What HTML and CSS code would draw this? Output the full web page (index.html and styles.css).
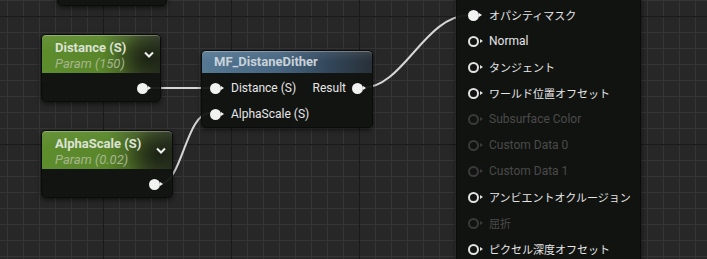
FILE: index.html
```html
<!DOCTYPE html>
<html lang="ja">
  <head>
    <meta charset="utf-8">
    <title>Material Graph</title>
    <link rel="stylesheet" href="styles.css">
  </head>
  <body>
    <div class="graph">
      <svg class="wires" width="707" height="259" viewBox="0 0 707 259">
        <path d="M150 88 L210 88"/>
        <path d="M160 184 C 182 184, 186 113, 210 113"/>
        <path d="M362 88 C 404 88, 424 15, 470 15"/>
      </svg>

      <div class="node stub"></div>

      <div class="node param n-distance">
        <div class="head">
          <div class="titles">
            <div class="title">Distance (S)</div>
            <div class="sub">Param (150)</div>
          </div>
          <svg class="chev" width="10" height="7" viewBox="0 0 10 7"><path d="M1 1.5 L5 5.5 L9 1.5"/></svg>
        </div>
        <div class="body out">
          <span class="pin on"></span>
        </div>
      </div>

      <div class="node param n-alpha">
        <div class="head">
          <div class="titles">
            <div class="title">AlphaScale (S)</div>
            <div class="sub">Param (0.02)</div>
          </div>
          <svg class="chev" width="10" height="7" viewBox="0 0 10 7"><path d="M1 1.5 L5 5.5 L9 1.5"/></svg>
        </div>
        <div class="body out">
          <span class="pin on"></span>
        </div>
      </div>

      <div class="node func n-dither">
        <div class="head">MF_DistaneDither</div>
        <div class="body">
          <div class="row">
            <div class="in"><span class="pin on"></span><span>Distance (S)</span></div>
            <div class="outp"><span>Result</span><span class="pin on"></span></div>
          </div>
          <div class="row">
            <div class="in"><span class="pin on"></span><span>AlphaScale (S)</span></div>
          </div>
        </div>
      </div>

      <div class="node result">
        <div class="in"><span class="pin on"></span><span class="jp">オパシティマスク</span></div>
        <div class="in"><span class="pin"></span><span>Normal</span></div>
        <div class="in"><span class="pin"></span><span class="jp">タンジェント</span></div>
        <div class="in"><span class="pin"></span><span class="jp">ワールド位置オフセット</span></div>
        <div class="in off"><span class="pin"></span><span>Subsurface Color</span></div>
        <div class="in off"><span class="pin"></span><span>Custom Data 0</span></div>
        <div class="in off"><span class="pin"></span><span>Custom Data 1</span></div>
        <div class="in"><span class="pin"></span><span class="jp">アンビエントオクルージョン</span></div>
        <div class="in off"><span class="pin"></span><span class="jp">屈折</span></div>
        <div class="in"><span class="pin"></span><span class="jp">ピクセル深度オフセット</span></div>
      </div>
    </div>
  </body>
</html>
```

FILE: styles.css
```css
body{
  margin: 0;
  background-color: #272727;
  font-family: Roboto, "Noto Sans CJK JP", sans-serif;
  color: #e4e4e4;
}
.graph{
  position: relative;
  width: 707px;
  height: 259px;
  overflow: hidden;
  background-color: #272727;
  background-image:
    linear-gradient(to right, #1a1a1a 1px, transparent 1px),
    linear-gradient(to bottom, #1a1a1a 1px, transparent 1px),
    linear-gradient(to right, #353535 1px, transparent 1px),
    linear-gradient(to bottom, #353535 1px, transparent 1px);
  background-size: 128px 128px, 128px 128px, 16px 16px, 16px 16px;
  background-position: 103px 0, 0 16px, 7px 0, 0 0;
}
.wires{
  position: absolute;
  left: 0;
  top: 0;
}
.wires path{
  fill: none;
  stroke: #d6d6d6;
  stroke-width: 2;
  stroke-linecap: round;
}

/* nodes sit on the canvas at their own place */
.node{
  position: absolute;
  box-sizing: border-box;
  border: 1px solid #0b0b0b;
  border-radius: 5px;
  background-color: rgba(17, 19, 17, 0.94);
  box-shadow: 0 2px 5px rgba(0, 0, 0, 0.55);
}
.stub{
  left: 57px;
  top: -40px;
  width: 110px;
  height: 46px;
}
.n-distance{
  left: 41px;
  top: 34px;
  width: 120px;
  height: 68px;
}
.n-alpha{
  left: 41px;
  top: 130px;
  width: 132px;
  height: 68px;
}
.n-dither{
  left: 201px;
  top: 50px;
  width: 172px;
  height: 78px;
}
.result{
  left: 456px;
  top: -12px;
  width: 185px;
  height: 300px;
  padding-top: 13px;
  border-radius: 0;
  background-color: rgba(16, 18, 16, 0.95);
}

.head{
  border-radius: 4px 4px 0 0;
  box-shadow: inset 0 1px 0 rgba(255, 255, 255, 0.28);
}
.param .head{
  display: flex;
  justify-content: space-between;
  align-items: center;
  height: 38px;
  padding: 0 6px 0 13px;
  background:
    radial-gradient(ellipse 34px 26px at 90% 62%, rgba(24, 30, 18, 0.85), transparent),
    linear-gradient(to bottom, rgba(255, 255, 255, 0.06), transparent 40%),
    linear-gradient(to right, #5e8d2e 0%, #588629 50%, #3b4d22 82%, #2c3523 100%);
}
.titles{
  align-self: flex-start;
  padding-top: 5px;
}
.title{
  font-size: 13px;
  font-weight: bold;
  line-height: 16px;
  color: #dde2d6;
}
.sub{
  font-size: 13px;
  font-style: italic;
  line-height: 16px;
  color: #a7b68f;
}
.chev path{
  fill: none;
  stroke: #f0f0f0;
  stroke-width: 2;
}
.body.out{
  display: flex;
  justify-content: flex-end;
  align-items: center;
  height: 29px;
  padding-right: 12px;
  padding-top: 1px;
  box-sizing: border-box;
}

.func .head{
  height: 22px;
  line-height: 22px;
  padding: 0 12px;
  font-size: 13px;
  font-weight: bold;
  color: #c9d2da;
  background:
    linear-gradient(to bottom, rgba(255, 255, 255, 0.08), transparent 50%),
    linear-gradient(to right, #557893 0%, #466580 45%, #32465a 75%, #283038 100%);
}
.func .body{
  padding-top: 2px;
}
.row{
  display: flex;
  justify-content: space-between;
  align-items: center;
  height: 26px;
  padding: 0 9px 0 8px;
}
.in, .outp{
  display: flex;
  align-items: center;
  gap: 10px;
  font-size: 12px;
  color: #e6e6e6;
}
.outp{
  gap: 6px;
}
.result .in{
  height: 26px;
  padding-left: 11px;
}
.result .off{
  color: #4a4a4a;
}
.jp{
  font-size: 11px;
  font-family: "Noto Sans CJK JP", sans-serif;
}

/* pin: circle with a small arrow on the right */
.pin{
  position: relative;
  display: inline-block;
  box-sizing: border-box;
  width: 11px;
  height: 11px;
  border: 2px solid #e2e2e2;
  border-radius: 50%;
  flex: none;
}
.pin.on{
  background-color: #f2f2f2;
  border-color: #f2f2f2;
}
.pin::after{
  content: "";
  position: absolute;
  left: 10px;
  top: 1.5px;
  border-left: 3px solid #e2e2e2;
  border-top: 2.5px solid transparent;
  border-bottom: 2.5px solid transparent;
}
.pin.on::after{
  border-left-color: #f2f2f2;
  left: 9px;
}
.off .pin{
  border-color: #3a3a3a;
}
.off .pin::after{
  border-left-color: #3a3a3a;
}
```
